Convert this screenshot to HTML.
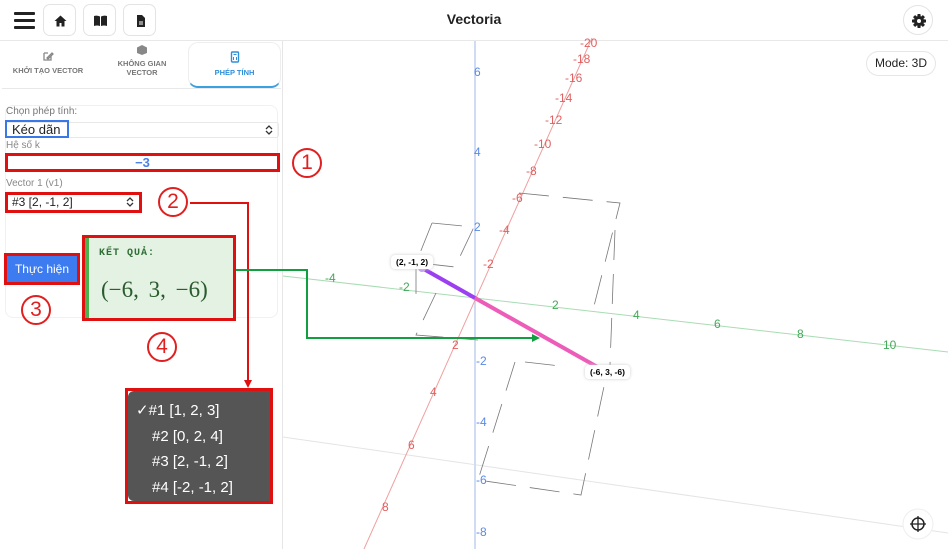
<!DOCTYPE html>
<html><head><meta charset="utf-8"><style>
*{box-sizing:border-box;margin:0;padding:0}
body{width:948px;height:549px;overflow:hidden;background:#fff;font-family:"Liberation Sans","DejaVu Sans",sans-serif;position:relative}
.abs{position:absolute}
.btn{position:absolute;top:4px;width:33px;height:32px;border:1px solid #e3e3e3;border-radius:7px;background:#fff}
.tab{position:absolute;top:42px;height:46px;font-size:7.5px;font-weight:bold;color:#777;text-align:center;line-height:9px}
.lbl{position:absolute;font-size:12px}
.r{color:#e06060}.b{color:#5a8ae6}.g{color:#45a85a}
.circ{position:absolute;width:30px;height:30px;border:2px solid #e02020;border-radius:50%;color:#e02020;font-size:21px;text-align:center;line-height:26px}
</style></head><body>
<!-- top bar -->
<div class="abs" style="left:0;top:40px;width:948px;height:1px;background:#e8e8e8"></div>
<div class="abs" style="left:14px;top:12px;width:21px;height:3px;background:#222;border-radius:1px"></div>
<div class="abs" style="left:14px;top:19px;width:21px;height:3px;background:#222;border-radius:1px"></div>
<div class="abs" style="left:14px;top:26px;width:21px;height:3px;background:#222;border-radius:1px"></div>
<div class="btn" style="left:43px"><svg width="33" height="32"><path d="M10.5 16 L16.5 10.5 L22.5 16 H20.5 V21.5 H17.5 V18 H15.5 V21.5 H12.5 V16Z" fill="#222"/></svg></div>
<div class="btn" style="left:83px"><svg width="33" height="32"><path d="M10 11 Q13 10 16 11.5 V21 Q13 20 10 21Z M17 11.5 Q20 10 23 11 V21 Q20 20 17 21Z" fill="#222"/></svg></div>
<div class="btn" style="left:123px"><svg width="33" height="32"><path d="M13 10 H18 L21 13 V22 H13Z" fill="#222"/><path d="M15 17H19M15 19H19" stroke="#fff" stroke-width="1"/></svg></div>
<div class="abs" style="left:0;top:11px;width:948px;text-align:center;font-weight:bold;font-size:14px;color:#222">Vectoria</div>
<div class="abs" style="left:903px;top:5px;width:30px;height:30px;border:1px solid #e3e3e3;border-radius:50%"><svg width="30" height="30"><g transform="translate(15 15)" fill="#222"><rect x="-1.6" y="-7" width="3.2" height="14" rx="0.8"/><rect x="-1.6" y="-7" width="3.2" height="14" rx="0.8" transform="rotate(45)"/><rect x="-1.6" y="-7" width="3.2" height="14" rx="0.8" transform="rotate(90)"/><rect x="-1.6" y="-7" width="3.2" height="14" rx="0.8" transform="rotate(135)"/><circle r="5"/><circle r="2" fill="#fff"/></g></svg></div>

<!-- left panel -->
<div class="abs" style="left:282px;top:41px;width:1px;height:508px;background:#e6e6e6"></div>
<div class="abs" style="left:2px;top:88px;width:279px;height:1px;background:#e8e8e8"></div>
<div class="tab" style="left:0;width:96px"><svg width="12" height="12" style="margin-top:8px"><path d="M2 3 H6 M2 3 V10 H9 V6 M5 8 L10 3 L11 4 L6 9Z" stroke="#888" fill="none" stroke-width="1.3"/></svg><div style="margin-top:2px">KHỞI TẠO VECTOR</div></div>
<div class="tab" style="left:96px;width:92px"><svg width="12" height="10" style="margin-top:3px"><path d="M6 0 L11 2.5 V8 L6 10 L1 8 V2.5Z" fill="#888"/></svg><div style="margin-top:2px">KHÔNG GIAN<br>VECTOR</div></div>
<div class="tab" style="left:188px;width:93px;border:1px solid #eee;border-bottom:2px solid #3aa0e0;border-radius:10px;color:#2d8fd8;background:#fff"><svg width="10" height="12" style="margin-top:8px"><rect x="1.5" y="1" width="7" height="10" rx="1" fill="none" stroke="#2d8fd8" stroke-width="1.4"/><path d="M3.5 6V9M6.5 6V9M3.5 3.5H6.5" stroke="#2d8fd8"/></svg><div style="margin-top:3px">PHÉP TÍNH</div></div>

<div class="abs" style="left:5px;top:105px;width:273px;height:213px;border:1px solid #f1f1f1;border-radius:8px"></div>
<div class="abs" style="left:6px;top:106px;font-size:10px;color:#777">Chọn phép tính:</div>
<div class="abs" style="left:6px;top:122px;width:273px;height:16px;border:1px solid #e8e8e8;border-radius:3px"></div>
<svg class="abs" style="left:264px;top:124px" width="10" height="12"><path d="M2 5 L5 2 L8 5 M2 7 L5 10 L8 7" stroke="#333" stroke-width="1.3" fill="none"/></svg>
<div class="abs" style="left:5px;top:120px;width:64px;height:18px;border:2px solid #3a78e8"></div>
<div class="abs" style="left:12px;top:122px;font-size:13px;color:#222">Kéo dãn</div>
<div class="abs" style="left:6px;top:140px;font-size:10px;color:#888">Hệ số k</div>
<div class="abs" style="left:5px;top:153px;width:275px;height:19px;border:3px solid #e01010"></div>
<div class="abs" style="left:0;top:155px;width:285px;text-align:center;font-size:13px;font-weight:bold;color:#4a80e8">−3</div>
<div class="abs" style="left:6px;top:178px;font-size:10px;color:#888">Vector 1 (v1)</div>
<div class="abs" style="left:5px;top:192px;width:137px;height:21px;border:3px solid #e01010"></div>
<div class="abs" style="left:12px;top:195px;font-size:12px;color:#222">#3 [2, -1, 2]</div>
<svg class="abs" style="left:125px;top:196px" width="10" height="12"><path d="M2 5 L5 2 L8 5 M2 7 L5 10 L8 7" stroke="#333" stroke-width="1.3" fill="none"/></svg>

<div class="abs" style="left:4px;top:253px;width:76px;height:32px;border:3px solid #e01010;background:#3d7bf0"></div>
<div class="abs" style="left:4px;top:262px;width:76px;text-align:center;font-size:12px;color:#fff">Thực hiện</div>

<div class="abs" style="left:82px;top:235px;width:154px;height:86px;border:3px solid #e01010;background:#e4f2e3"></div>
<div class="abs" style="left:85px;top:238px;width:4px;height:80px;background:#4caf50"></div>
<div class="abs" style="left:99px;top:248px;font-family:'Liberation Mono',monospace;font-weight:bold;font-size:10px;color:#2f6e35;letter-spacing:1px">KẾT QUẢ:</div>
<div class="abs" style="left:101px;top:277px;font-family:'Liberation Serif',serif;font-size:23px;color:#2a5a2d;word-spacing:4px">(−6, 3, −6)</div>

<div class="circ" style="left:292px;top:148px">1</div>
<div class="circ" style="left:158px;top:187px">2</div>
<div class="circ" style="left:21px;top:295px">3</div>
<div class="circ" style="left:147px;top:332px">4</div>

<!-- dropdown -->
<div class="abs" style="left:125px;top:388px;width:148px;height:116px;border:3px solid #e01010;background:#fff"></div>
<div class="abs" style="left:128px;top:391px;width:142px;height:110px;background:#555;border-radius:6px 0 0 6px"></div>
<div class="abs" style="left:136px;top:398px;font-size:15px;color:#fff;line-height:25.5px">✓#1 [1, 2, 3]<br><span style="padding-left:16px">#2 [0, 2, 4]</span><br><span style="padding-left:16px">#3 [2, -1, 2]</span><br><span style="padding-left:16px">#4 [-2, -1, 2]</span></div>

<!-- canvas svg -->
<svg class="abs" style="left:0;top:0" width="948" height="549">
<defs><marker id="ar" markerUnits="userSpaceOnUse" markerWidth="8" markerHeight="8" refX="6" refY="4" orient="auto"><path d="M0 0 L8 4 L0 8Z" fill="#e01010"/></marker>
<marker id="ag" markerUnits="userSpaceOnUse" markerWidth="8" markerHeight="8" refX="6" refY="4" orient="auto"><path d="M0 0 L8 4 L0 8Z" fill="#10a040"/></marker></defs>
<path d="M283 437 L948 533" stroke="#e4e4e4" stroke-width="1"/>
<path d="M475 41 V549" stroke="#cfdcf3" stroke-width="2"/>
<path d="M592 38 L364 549" stroke="#f0a0a0" stroke-width="1"/>
<path d="M283 276 L948 352" stroke="#a8dcb4" stroke-width="1"/>
<g stroke="#777" stroke-width="0.8" fill="none" stroke-dasharray="30 14">
<path d="M432 223 L474 227 L455 267 L420 263"/>
<path d="M432 223 L416 263 L416 300"/>
<path d="M436 293 L416 335 L478 340"/>
<path d="M519 193 L620 203 L593 310"/>
<path d="M615 230 L610 365"/>
<path d="M515 362 L478 480 L581 495 L606 377"/>
<path d="M525 362 L560 366"/>
</g>
<path d="M422 268 L475 298" stroke="#9b3ff0" stroke-width="4"/>
<path d="M475 298 L601 369" stroke="#ec5cb8" stroke-width="4"/>
<circle cx="422" cy="268" r="4" fill="#c79cf5"/><circle cx="601" cy="369" r="4" fill="#f7b9dd"/>
<path d="M190 203 H248 V386" stroke="#e01010" stroke-width="2" fill="none" marker-end="url(#ar)"/>
<path d="M236 270 H307 V338 H538" stroke="#10a040" stroke-width="2" fill="none" marker-end="url(#ag)"/>
<circle cx="918" cy="524" r="15" fill="#fff" stroke="#eee"/>
<circle cx="918" cy="524" r="6" fill="none" stroke="#222" stroke-width="1.5"/><path d="M918 516V532M910 524H926" stroke="#222" stroke-width="1.3"/>
</svg>
<div class="abs" style="left:391px;top:255px;padding:2px 5px;background:#fff;border-radius:4px;box-shadow:0 0 3px #ccc;font-size:8.5px;font-weight:bold">(2, -1, 2)</div>
<div class="abs" style="left:585px;top:365px;padding:2px 5px;background:#fff;border-radius:4px;box-shadow:0 0 3px #ccc;font-size:8.5px;font-weight:bold">(-6, 3, -6)</div>
<div class="abs" style="left:866px;top:51px;width:70px;height:25px;border:1px solid #e6e6e6;border-radius:13px;font-size:12px;text-align:center;line-height:23px;color:#222">Mode: 3D</div>

<div class="lbl r" style="left:580px;top:36px">-20</div><div class="lbl r" style="left:573px;top:52px">-18</div><div class="lbl r" style="left:565px;top:71px">-16</div><div class="lbl r" style="left:555px;top:91px">-14</div><div class="lbl r" style="left:545px;top:113px">-12</div><div class="lbl r" style="left:534px;top:137px">-10</div><div class="lbl r" style="left:526px;top:164px">-8</div><div class="lbl r" style="left:512px;top:191px">-6</div><div class="lbl r" style="left:499px;top:223px">-4</div><div class="lbl r" style="left:483px;top:257px">-2</div><div class="lbl r" style="left:452px;top:338px">2</div><div class="lbl r" style="left:430px;top:385px">4</div><div class="lbl r" style="left:408px;top:438px">6</div><div class="lbl r" style="left:382px;top:500px">8</div>
<div class="lbl b" style="left:474px;top:65px">6</div><div class="lbl b" style="left:474px;top:145px">4</div><div class="lbl b" style="left:474px;top:220px">2</div><div class="lbl b" style="left:476px;top:354px">-2</div><div class="lbl b" style="left:476px;top:415px">-4</div><div class="lbl b" style="left:476px;top:473px">-6</div><div class="lbl b" style="left:476px;top:525px">-8</div>
<div class="lbl g" style="left:325px;top:271px">-4</div><div class="lbl g" style="left:399px;top:280px">-2</div><div class="lbl g" style="left:552px;top:298px">2</div><div class="lbl g" style="left:633px;top:308px">4</div><div class="lbl g" style="left:714px;top:317px">6</div><div class="lbl g" style="left:797px;top:327px">8</div><div class="lbl g" style="left:883px;top:338px">10</div>
</body></html>
